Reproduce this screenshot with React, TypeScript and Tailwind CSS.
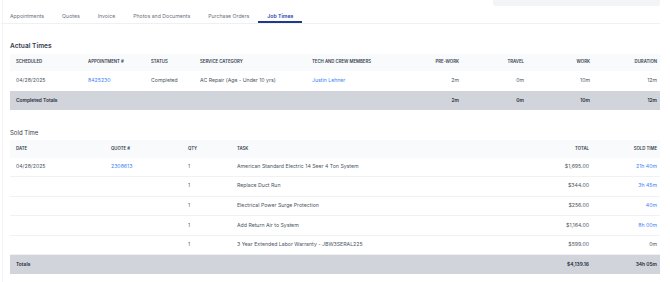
import React from 'react';

const tabs = ['Appointments', 'Quotes', 'Invoice', 'Photos and Documents', 'Purchase Orders', 'Job Times'];

const soldRows = [
  { date: '04/28/2025', quote: '2308613', qty: '1', task: 'American Standard Electric 14 Seer 4 Ton System', total: '$1,695.00', sold: '21h 40m', link: true },
  { date: '', quote: '', qty: '1', task: 'Replace Duct Run', total: '$344.00', sold: '3h 45m', link: true },
  { date: '', quote: '', qty: '1', task: 'Electrical Power Surge Protection', total: '$256.00', sold: '40m', link: true },
  { date: '', quote: '', qty: '1', task: 'Add Return Air to System', total: '$1,164.00', sold: '8h 00m', link: true },
  { date: '', quote: '', qty: '1', task: '3 Year Extended Labor Warranty - JBW3SERAL225', total: '$599.00', sold: '0m', link: false },
];

const actualCols = 'grid grid-cols-[72px_63px_49px_112px_94px_65px_65px_66px_64px]';
const soldCols = 'grid grid-cols-[95px_77px_49px_239px_125px_65px]';

export default function App() {
  return (
    <div className="relative w-[670px] h-[282px] bg-white overflow-hidden text-[#374151]" style={{ fontFamily: 'Inter, "Noto Sans", sans-serif' }}>
      {/* faint panel edge */}
      <div className="absolute left-[2px] top-0 bottom-0 w-px bg-[#f3f4f6]" />

      {/* top search box, cut off */}
      <div className="flex justify-end pr-[10px]">
        <div className="w-[167px] h-[6px] bg-[#f3f4f6] rounded-b-[3px]" />
      </div>

      {/* tabs */}
      <div className="ml-px mr-[10px] mt-[4px] flex border-b border-[#eef0f2]">
        {tabs.map((t) => {
          const active = t === 'Job Times';
          return (
            <div
              key={t}
              className={
                active
                  ? 'px-[9px] h-[13px] leading-[13px] text-[5.2px] font-semibold text-[#1e40af] border-b-2 border-[#1e3a8a] -mb-px'
                  : 'px-[9px] h-[13px] leading-[13px] text-[5.2px] text-[#6b7280]'
              }
            >
              {t}
            </div>
          );
        })}
      </div>

      <div className="px-[10px]">
        {/* Actual Times */}
        <div className="mt-[17px] h-[10px] leading-[10px] text-[6.6px] font-semibold text-[#374151]">Actual Times</div>
        <div className="mt-[3px]">
          <div className={`${actualCols} h-[17px] items-center bg-[#f9fafb] text-[4.3px] font-semibold uppercase text-[#374151]`}>
            <div className="pl-[6px]">Scheduled</div>
            <div className="pl-[6px]">Appointment #</div>
            <div className="pl-[6px]">Status</div>
            <div className="pl-[6px]">Service Category</div>
            <div className="pl-[6px] whitespace-nowrap">Tech and Crew Members</div>
            <div className="pr-[6px] text-right">Pre-Work</div>
            <div className="pr-[6px] text-right">Travel</div>
            <div className="pr-[6px] text-right">Work</div>
            <div className="pr-[3px] text-right">Duration</div>
          </div>
          <div className={`${actualCols} h-[20px] items-center text-[5.2px] text-[#4b5563]`}>
            <div className="pl-[6px]">04/28/2025</div>
            <div className="pl-[6px] text-[#3b82f6]">8425230</div>
            <div className="pl-[6px]">Completed</div>
            <div className="pl-[6px] whitespace-nowrap">AC Repair (Age - Under 10 yrs)</div>
            <div className="pl-[6px] text-[#3b82f6]">Justin Lehner</div>
            <div className="pr-[6px] text-right">2m</div>
            <div className="pr-[6px] text-right">0m</div>
            <div className="pr-[6px] text-right">10m</div>
            <div className="pr-[3px] text-right">12m</div>
          </div>
          <div className={`${actualCols} h-[19px] items-center bg-[#d1d5db] text-[4.9px] font-semibold text-[#1f2937]`}>
            <div className="pl-[6px] col-span-5">Completed Totals</div>
            <div className="pr-[6px] text-right">2m</div>
            <div className="pr-[6px] text-right">0m</div>
            <div className="pr-[6px] text-right">10m</div>
            <div className="pr-[3px] text-right">12m</div>
          </div>
        </div>

        {/* Sold Time */}
        <div className="mt-[18px] h-[10px] leading-[10px] text-[6px] text-[#374151]">Sold Time</div>
        <div className="mt-[2px]">
          <div className={`${soldCols} h-[17.5px] items-center bg-[#f9fafb] text-[4.3px] font-semibold uppercase text-[#374151]`}>
            <div className="pl-[6px]">Date</div>
            <div className="pl-[6px]">Quote #</div>
            <div className="pl-[6px]">Qty</div>
            <div className="pl-[6px]">Task</div>
            <div className="pr-[6px] text-right">Total</div>
            <div className="pr-[3px] text-right">Sold Time</div>
          </div>
          {soldRows.map((r, i) => (
            <div key={i} className={`${soldCols} h-[19.6px] items-center border-b border-[#f0f1f3] text-[5.2px] text-[#4b5563]`}>
              <div className="pl-[6px]">{r.date}</div>
              <div className="pl-[6px] text-[#3b82f6]">{r.quote}</div>
              <div className="pl-[6px]">{r.qty}</div>
              <div className="pl-[6px] whitespace-nowrap">{r.task}</div>
              <div className="pr-[6px] text-right">{r.total}</div>
              <div className={r.link ? 'pr-[3px] text-right text-[#3b82f6]' : 'pr-[3px] text-right'}>{r.sold}</div>
            </div>
          ))}
          <div className={`${soldCols} h-[19px] items-center bg-[#d1d5db] text-[4.9px] font-semibold text-[#1f2937]`}>
            <div className="pl-[6px] col-span-4">Totals</div>
            <div className="pr-[6px] text-right">$4,139.16</div>
            <div className="pr-[3px] text-right">34h 05m</div>
          </div>
        </div>
      </div>
    </div>
  );
}
